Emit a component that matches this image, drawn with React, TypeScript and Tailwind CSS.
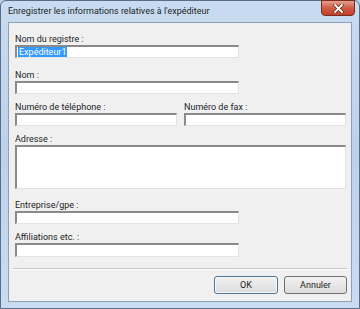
import React from 'react';

const font = { fontFamily: 'Roboto, "Liberation Sans", sans-serif' };

function Field({ label, className = '', w, h = 'h-[13px]' }: { label: string; className?: string; w: string; h?: string }) {
  return (
    <div className={className}>
      <div className="h-[12px] text-[9px] leading-[12px] text-[#1e1e1e]">{label}</div>
      <div className={`${w} ${h} border-t-2 border-l-2 border-t-[#8a8a8a] border-l-[#8a8a8a] border-r border-b border-r-[#e3e3e3] border-b-[#e3e3e3] bg-white`} />
    </div>
  );
}

export default function App() {
  return (
    <div className="w-[360px] h-[309px] overflow-hidden bg-[#bcd2ea]" style={font}>
      <div className="relative flex h-full w-full flex-col rounded-t-[6px] border border-[#5a6f86] bg-gradient-to-b from-[#c8dbf0] via-[#bcd2eb] to-[#c9dcf1] px-[7px] pb-[6px]">
        {/* title bar */}
        <div className="flex h-[21px] items-center">
          <span className="text-[9px] leading-none text-[#1e1e1e]">
            Enregistrer les informations relatives à l'expéditeur
          </span>
        </div>
        <div className="absolute right-[4px] top-[-1px] flex h-[16px] w-[34px] items-center justify-center rounded-b-[4px] border border-[#7a2b1f] bg-gradient-to-b from-[#e5a090] via-[#cf5a43] to-[#c2402b]">
          <svg width="11" height="9" viewBox="0 0 11 9">
            <path d="M2 1 L9 8 M9 1 L2 8" stroke="#5a2a20" strokeWidth="3.2" strokeLinecap="square" />
            <path d="M2 1 L9 8 M9 1 L2 8" stroke="#ffffff" strokeWidth="1.8" strokeLinecap="square" />
          </svg>
        </div>

        {/* client area */}
        <div className="flex flex-1 flex-col border border-[#8d9fb3] bg-[#f0f0f0]">
          <div className="flex flex-col pl-[6px] pt-[10px]">
            <div>
              <div className="h-[12px] text-[9px] leading-[12px] text-[#1e1e1e]">Nom du registre :</div>
              <div className="flex h-[13px] w-[224px] items-center border-t-2 border-l-2 border-t-[#8a8a8a] border-l-[#8a8a8a] border-r border-b border-r-[#e3e3e3] border-b-[#e3e3e3] bg-white pl-[1px]">
                <span className="bg-[#3399ff] px-[1px] text-[9px] leading-[10px] text-white">Expéditeur1</span>
              </div>
            </div>
            <Field label="Nom :" className="mt-[11px]" w="w-[224px]" />
            <div className="mt-[7px] flex gap-[7px]">
              <Field label="Numéro de téléphone :" w="w-[162px]" />
              <Field label="Numéro de fax :" w="w-[162px]" />
            </div>
            <Field label="Adresse :" className="mt-[7px]" w="w-[331px]" h="h-[44px]" />
            <Field label="Entreprise/gpe :" className="mt-[10px]" w="w-[224px]" />
            <Field label="Affiliations etc. :" className="mt-[7px]" w="w-[224px]" h="h-[14px]" />
          </div>
          <div className="mx-[4px] mt-[11px] h-[2px] border-t border-t-[#c6c6c6] border-b border-b-white" />
          <div className="mt-[6px] flex justify-end gap-[6px] pr-[4px]">
            <button className="h-[18px] w-[64px] rounded-[3px] border border-[#4f7797] bg-gradient-to-b from-[#f2f2f2] to-[#dcdcdc] text-[9px] leading-none text-[#1e1e1e] shadow-[inset_0_0_0_1px_#f8f8f8]">
              OK
            </button>
            <button className="h-[18px] w-[63px] rounded-[3px] border border-[#707070] bg-gradient-to-b from-[#f2f2f2] to-[#dcdcdc] text-[9px] leading-none text-[#1e1e1e]">
              Annuler
            </button>
          </div>
        </div>
      </div>
    </div>
  );
}
